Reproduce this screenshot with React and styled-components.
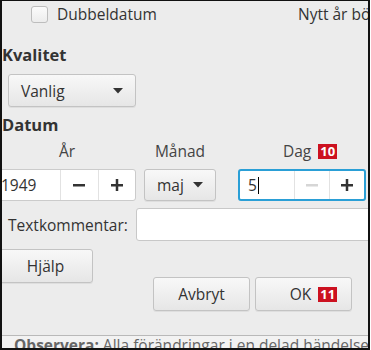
import styled, { createGlobalStyle } from 'styled-components';

const GlobalStyle = createGlobalStyle`
    body {
        margin: 0;
        background: #ffffff;
        font-family: "Open Sans", "Liberation Sans", sans-serif;
    }
`

function Minus ({ muted }) {
    return (
        <svg width="12" height="12" viewBox="0 0 12 12">
            <rect x="0" y="5" width="12" height="2.5" fill={muted ? '#d6d6d6' : '#333'} />
        </svg>
    )
}

function Plus () {
    return (
        <svg width="12" height="12" viewBox="0 0 12 12">
            <rect x="0" y="5" width="12" height="2.5" fill="#333" />
            <rect x="4.75" y="0" width="2.5" height="12.5" fill="#333" />
        </svg>
    )
}

function Arrow () {
    return (
        <svg width="10" height="6" viewBox="0 0 10 6">
            <path d="M0 0 L10 0 L5 5.5 Z" fill="#333" />
        </svg>
    )
}

export default function App () {
    return (
        <>
            <GlobalStyle />
            <Frame>
                <Dialog>
                    <TopRow>
                        <CheckLabel>
                            <CheckBox />
                            Dubbeldatum
                        </CheckLabel>
                        <NewYear>Nytt år börjar</NewYear>
                    </TopRow>

                    <SectionTitle>Kvalitet</SectionTitle>
                    <Select $width={128} $height={33}>
                        <span>Vanlig</span>
                        <Arrow />
                    </Select>

                    <SectionTitle $top={8}>Datum</SectionTitle>
                    <DateGrid>
                        <FieldLabel>År</FieldLabel>
                        <FieldLabel>Månad</FieldLabel>
                        <FieldLabel $shift={30}>Dag<Badge>10</Badge></FieldLabel>

                        <Spinner $offset={-6}>
                            <SpinValue $width={68}>1949</SpinValue>
                            <SpinButton><Minus /></SpinButton>
                            <SpinButton><Plus /></SpinButton>
                        </Spinner>
                        <Select $width={72} $height={32}>
                            <span>maj</span>
                            <Arrow />
                        </Select>
                        <Spinner $focused $offset={14}>
                            <SpinValue $width={55}>5<Caret /></SpinValue>
                            <SpinButton><Minus muted /></SpinButton>
                            <SpinButton><Plus /></SpinButton>
                        </Spinner>
                    </DateGrid>

                    <CommentRow>
                        <CommentLabel>Textkommentar:</CommentLabel>
                        <CommentInput />
                    </CommentRow>

                    <ButtonBar>
                        <Button $width={95} $offset={-4}>Hjälp</Button>
                        <RightButtons>
                            <Button $width={97}>Avbryt</Button>
                            <Button $width={97} $shift={20}>OK<Badge>11</Badge></Button>
                        </RightButtons>
                    </ButtonBar>
                </Dialog>
                <Footer><b>Observera:</b> Alla förändringar i en delad händelse</Footer>
            </Frame>
        </>
    )
}

const Frame = styled.div`
    width: 370px;
    height: 350px;
    box-sizing: border-box;
    border: 2px solid #111;
    border-top-width: 1px;
    overflow: hidden;
    display: flex;
    flex-direction: column;
    background: #f2f2f2;
    color: #333;
    font-size: 15.5px;
`
const Dialog = styled.div`
    height: 335px;
    flex-shrink: 0;
    box-sizing: border-box;
    background: #ececec;
    border-bottom: 1px solid #b9b9b9;
    display: flex;
    flex-direction: column;
    align-items: flex-start;
`
const TopRow = styled.div`
    display: flex;
    align-items: center;
    height: 26px;
    width: 100%;
    white-space: nowrap;
`
const CheckLabel = styled.label`
    display: flex;
    align-items: center;
    gap: 9px;
    margin-left: 29px;
    width: 267px;
    flex-shrink: 0;
`
const CheckBox = styled.span`
    width: 15px;
    height: 15px;
    border: 1px solid #bdbdbd;
    border-radius: 3px;
    background: linear-gradient(to bottom, #fbfbfb, #ececec);
`
const NewYear = styled.span``

const SectionTitle = styled.div`
    font-weight: bold;
    font-size: 16.5px;
    line-height: 20px;
    margin-top: ${p => p.$top ?? 18}px;
`
const Select = styled.div`
    width: ${p => p.$width}px;
    height: ${p => p.$height}px;
    box-sizing: border-box;
    margin-top: 9px;
    margin-left: 6px;
    padding: 0 12px;
    display: flex;
    align-items: center;
    justify-content: space-between;
    border: 1px solid #c3c3c3;
    border-radius: 3px;
    background: linear-gradient(to bottom, #f8f8f8, #e6e6e6);
    box-shadow: 0 1px 0 rgba(0, 0, 0, 0.06);
`
const DateGrid = styled.div`
    display: grid;
    grid-template-columns: 138px 72px 142px;
    column-gap: 8px;
    row-gap: 8px;
    margin-top: 6px;
    margin-left: -4px;

    & > ${Select} {
        margin: 0;
        grid-column: 2;
    }
`
const FieldLabel = styled.div`
    text-align: center;
    line-height: 20px;
    color: #444;
    white-space: nowrap;
    padding-left: ${p => p.$shift ?? 0}px;
`
const Badge = styled.span`
    display: inline-block;
    background: #cc1120;
    color: #fff;
    font-weight: bold;
    font-size: 13px;
    line-height: 15px;
    padding: 0 2px;
    margin-left: 7px;
    vertical-align: 1px;
`
const Spinner = styled.div`
    display: flex;
    height: 32px;
    box-sizing: border-box;
    margin-left: ${p => p.$offset ?? 0}px;
    background: #fff;
    border: ${p => p.$focused ? '2px solid #2a9fd6' : '1px solid #cbcbcb'};
    border-radius: 3px;
    overflow: hidden;
`
const SpinValue = styled.div`
    width: ${p => p.$width}px;
    flex-shrink: 0;
    display: flex;
    align-items: center;
    padding-left: 8px;
    box-sizing: border-box;
    border-right: 1px solid #e2e2e2;
`
const Caret = styled.span`
    width: 1px;
    height: 17px;
    background: #000;
    margin-left: 1px;
`
const SpinButton = styled.div`
    flex: 1;
    display: flex;
    align-items: center;
    justify-content: center;
    & + & {
        border-left: 1px solid #e2e2e2;
    }
`
const CommentRow = styled.div`
    display: flex;
    align-items: center;
    gap: 8px;
    margin-top: 7px;
    margin-left: 6px;
    width: 400px;
`
const CommentLabel = styled.span`
    white-space: nowrap;
`
const CommentInput = styled.div`
    flex: 1;
    height: 33px;
    box-sizing: border-box;
    background: #fff;
    border: 1px solid #c8c8c8;
    border-radius: 3px;
`
const ButtonBar = styled.div`
    display: flex;
    align-items: flex-start;
    margin-top: 8px;
    width: 100%;
`
const RightButtons = styled.div`
    display: flex;
    gap: 5px;
    margin-top: 28px;
    margin-left: 60px;
`
const Button = styled.div`
    width: ${p => p.$width}px;
    height: 34px;
    box-sizing: border-box;
    margin-left: ${p => p.$offset ?? 0}px;
    padding-left: ${p => p.$shift ?? 0}px;
    display: flex;
    align-items: center;
    justify-content: center;
    border: 1px solid #c3c3c3;
    border-radius: 3px;
    background: linear-gradient(to bottom, #f8f8f8, #e6e6e6);
    box-shadow: 0 1px 0 rgba(0, 0, 0, 0.06);
`
const Footer = styled.div`
    padding-left: 12px;
    white-space: nowrap;
    color: #666;
    line-height: 20px;
    margin-top: -1px;
`
